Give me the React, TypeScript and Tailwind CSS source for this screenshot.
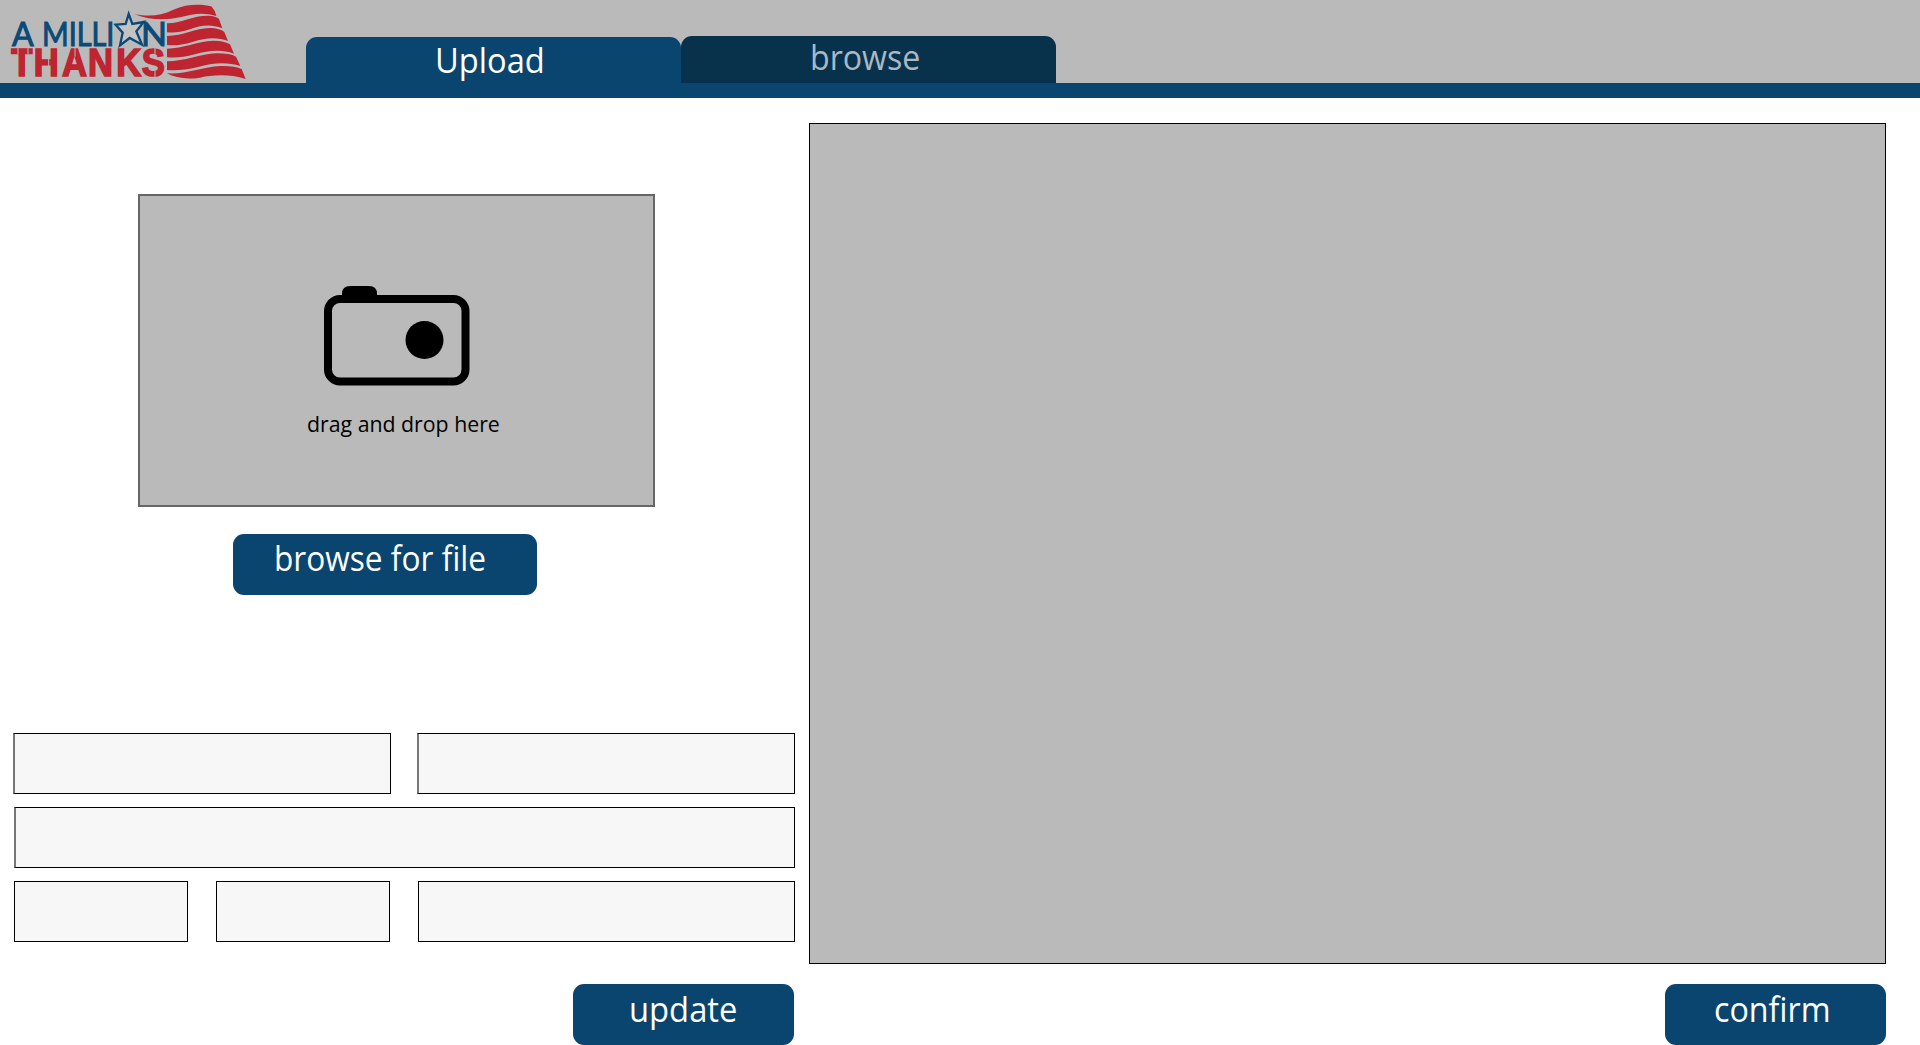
import type { ReactNode } from "react";

function Logo() {
  return (
    <svg viewBox="0 0 780 249" className="h-[83px] w-[260px] shrink-0" aria-label="A Million Thanks">
      <g fill="#0b4a78" stroke="#0b4a78" strokeWidth="3" fontFamily="Lato, sans-serif" fontSize="96">
        <text x="36" y="137">A</text>
        <text x="126" y="137" textLength="217" lengthAdjust="spacingAndGlyphs">MILLI</text>
        <text x="423" y="137" textLength="78" lengthAdjust="spacingAndGlyphs">N</text>
      </g>
      <path
        d="M386 42 L397 72 L431 66 L409 94 L426 134 L389 114 L360 136 L368 98 L347 74 L377 72 Z"
        fill="#c3c3c3"
        stroke="#0b4a78"
        strokeWidth="7"
      />
      <text
        transform="scale(0.88 1)"
        x="38.6 114.8 211.4 300 396.6 483"
        y="229"
        fill="#bf2431"
        stroke="#bf2431"
        strokeWidth="5"
        fontFamily="'Liberation Sans', sans-serif"
        fontWeight="700"
        fontSize="118"
      >
        THANKS
      </text>
      <g stroke="#bababa" strokeWidth="3">
        <path d="M54 142V162M84 142V162M146 172V200M225 144V170M465 142V162M465 212V234" />
      </g>
      <g fill="#bf2431">
        <path d="M403 42C445 50 480 49 520 29C560 11 605 12 634 19Q646 32 649 48C610 36 580 41 540 52C490 63 440 58 403 42Z" />
        <path d="M501 70C550 68 580 46 625 47Q648 48 657 57L667 85C630 71 600 77 570 88C540 98 520 99 501 97Z" />
        <path d="M501 108C550 107 585 85 630 84Q660 85 673 96L684 123C650 110 615 114 580 125C545 136 520 137 501 135Z" />
        <path d="M501 146C550 145 590 124 640 122Q675 123 690 133L702 161C665 147 625 151 585 163C550 173 525 174 501 172Z" />
        <path d="M501 184C555 184 600 162 650 160Q690 160 708 170L721 198C680 185 635 189 595 201C555 211 525 212 501 210Z" />
        <path d="M501 220C555 224 610 200 660 198Q705 197 725 207L737 237C690 222 640 224 600 233C560 239 525 234 501 220Z" />
      </g>
    </svg>
  );
}

function Camera() {
  return (
    <svg viewBox="0 0 146 101" className="h-[101px] w-[146px]" aria-hidden="true">
      <path d="M18 12V8Q18 0 26 0H45Q53 0 53 8V12Z" />
      <rect x="4" y="13" width="137.5" height="82.5" rx="12" fill="none" stroke="#000" strokeWidth="8" />
      <circle cx="100.5" cy="54" r="19" />
    </svg>
  );
}

function Button({ className, children }: { className: string; children: ReactNode }) {
  return (
    <button
      className={`flex h-[61px] items-start rounded-[11px] bg-[#09456f] text-[34px] leading-none whitespace-nowrap text-white ${className}`}
    >
      {children}
    </button>
  );
}

function Field({ className }: { className: string }) {
  return <input className={`h-[61px] min-w-0 border border-black bg-[#f7f7f7] outline-none ${className}`} />;
}

export default function App() {
  return (
    <div className="flex h-[1045px] w-[1920px] flex-col overflow-hidden bg-white font-['Open_Sans','Noto_Sans',sans-serif]">
      <header className="flex h-[98px] shrink-0 items-start border-b-[15px] border-[#09456f] bg-[#bababa]">
        <Logo />
        <nav className="ml-[46px] flex h-[83px] items-end text-[34px] leading-none">
          <button className="flex h-[46px] w-[375px] items-start rounded-t-[11px] bg-[#09456f] pt-[6px] pl-[129px] text-white">
            <span className="origin-left scale-x-[0.96]">Upload</span>
          </button>
          <button className="flex h-[47px] w-[375px] items-start rounded-t-[11px] bg-[#08324c] pt-[4px] pl-[129px] text-[#a9b8c4]">
            <span className="origin-left scale-x-[0.945]">browse</span>
          </button>
        </nav>
      </header>

      <main className="flex grow">
        <section className="ml-[13px] flex w-[782px] flex-col">
          <div className="mt-[96px] ml-[125px] flex h-[313px] w-[517px] flex-col border-2 border-[#666] bg-[#bababa]">
            <div className="mt-[90px] ml-[184px]">
              <Camera />
            </div>
            <p className="mt-[26px] ml-[167px] w-fit origin-left scale-x-[0.946] text-[22.5px] leading-none whitespace-nowrap text-black">
              drag and drop here
            </p>
          </div>
          <Button className="mt-[27px] ml-[220px] w-[304px] pt-[7px] pl-[41px]">
            <span className="origin-left scale-x-[0.93]">browse for file</span>
          </Button>

          <form className="mt-[138px] flex flex-col gap-[13px]">
            <div className="flex justify-between">
              <Field className="w-[378px] border-l-2 border-l-[#777]" />
              <Field className="w-[378px] border-l-2 border-l-[#777]" />
            </div>
            <Field className="ml-px w-[781px] border-l-2 border-l-[#777]" />
            <div className="ml-px flex gap-[28px]">
              <Field className="w-[174px]" />
              <Field className="w-[174px]" />
              <Field className="w-[377px]" />
            </div>
          </form>
          <Button className="mt-[42px] mr-px w-[221px] self-end pt-[8px] pl-[56px]">
            <span className="origin-left scale-x-[0.963]">update</span>
          </Button>
        </section>

        <section className="ml-[14px] flex w-[1077px] flex-col pt-[25px]">
          <div className="h-[841px] border border-black bg-[#bababa]" />
          <Button className="mt-[20px] w-[221px] self-end pt-[8px] pl-[49px]">
            <span className="origin-left scale-x-[0.948]">confirm</span>
          </Button>
        </section>
      </main>
    </div>
  );
}
